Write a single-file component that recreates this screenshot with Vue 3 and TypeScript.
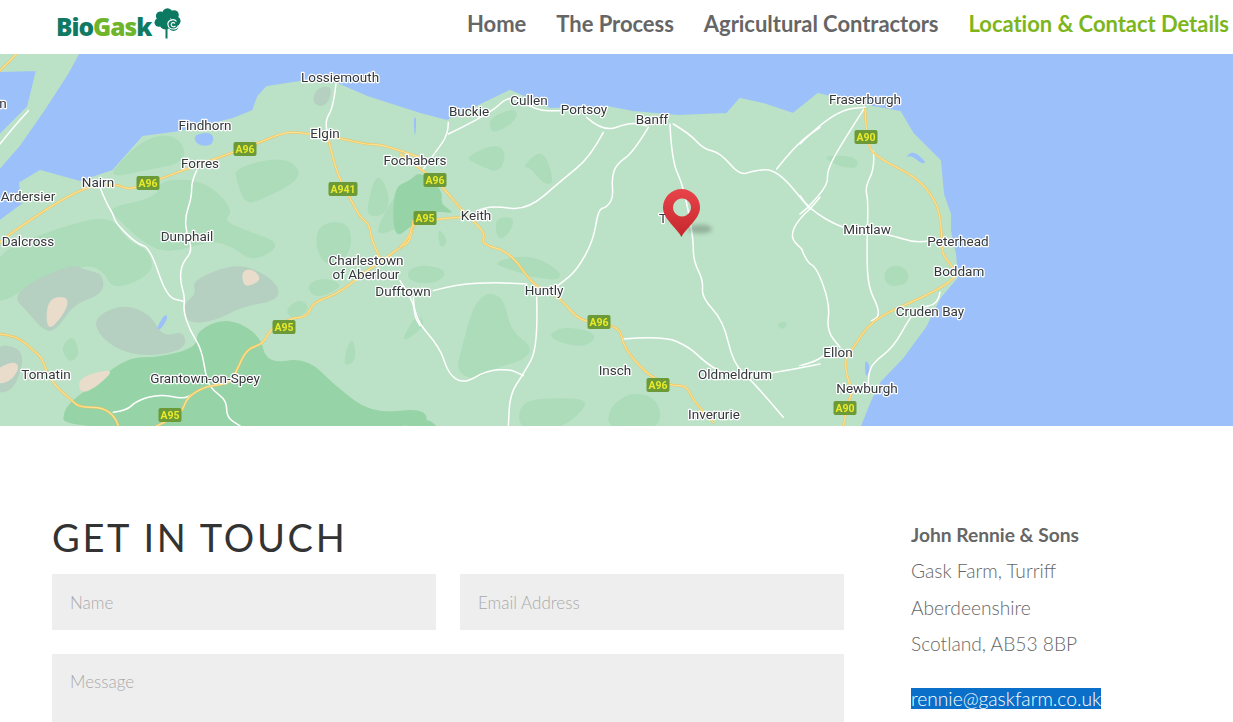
<script setup lang="ts">
type Pt = [number, number]
type Origin = 0 | 400 | 800

const smooth = (p: number[], closed = true): string => {
  const pts: Pt[] = []
  for (let i = 0; i < p.length; i += 2) pts.push([p[i], p[i + 1]])
  const mid = (a: Pt, b: Pt): string => `${(a[0] + b[0]) / 2} ${(a[1] + b[1]) / 2}`
  if (closed) {
    let d = `M${mid(pts[pts.length - 1], pts[0])}`
    pts.forEach((q, i) => {
      d += `Q${q[0]} ${q[1]} ${mid(q, pts[(i + 1) % pts.length])}`
    })
    return d + 'Z'
  }
  let d = `M${pts[0][0]} ${pts[0][1]}`
  for (let i = 1; i < pts.length - 1; i++) d += `Q${pts[i][0]} ${pts[i][1]} ${mid(pts[i], pts[i + 1])}`
  const last = pts[pts.length - 1]
  return d + `L${last[0]} ${last[1]}`
}

const land =
  'M0 54L78 54L67 74L43 111L20 144L0 167L0 135L28 107L37 70L0 71Z' +
  'M0 221L23 204L20 183L40 171L80 182L113 171L143 137L180 132L233 119L253 111L258 97L267 87L300 82L337 84L367 97L420 114' +
  'L447 121L483 104L510 91L550 109L607 107L633 112L677 116L727 114L740 99L763 104L793 114L818 94L867 106L900 112L913 134L940 161L943 194L950 214L950 231L955 254L957 277L940 297L925 327L903 357L880 381L870 401L860 426L0 426Z'

const forest: Record<Origin, number[][]> = {
  0: [
    [705,340,860,305,915,370,780,440,735,450,710,380],
    [340,340,440,250,520,240,560,290,540,330,430,350,340,370],
    [480,380,570,375,640,400,700,470,670,500,740,530,850,570,760,625,700,580,640,560,500,600,420,560,340,480,330,460,470,430],
    [-20,600,150,530,330,480,380,560,450,590,460,660,340,710,310,650,250,630,100,690,20,740,-20,740],
    [950,510,1050,500,1055,600,990,640,950,600],
    [1100,460,1130,350,1170,420,1160,480,1110,490],
    [1130,550,1240,500,1280,370,1200,400,1140,500],
    [920,690,970,670,1030,690,990,720,940,730],
    [180,880,220,840,240,900,210,930],
    [860,760,900,735,930,760,900,790,865,790],
    [1040,880,1060,850,1070,920,1030,940]
  ],
  400: [
    [270,190,350,160,350,200,290,235,270,230],
    [195,310,280,270,320,290,300,360,230,330],
    [365,340,430,280,465,390,430,390,390,340],
    [20,650,70,630,145,650,110,690,30,685],
    [285,490,350,490,320,550,290,555],
    [270,625,390,600,480,650,480,680,400,670,340,650],
    [180,900,230,720,310,720,330,830,400,880,370,920,290,940,220,980,170,950],
    [435,850,490,815,600,840,550,885],
    [360,1040,480,1030,580,1040,480,1130,355,1130],
    [625,1060,700,1010,780,1040,780,1130,625,1130],
    [8,850,50,780,80,810,20,860],
    [1125,810,1165,800,1150,830],
    [115,520,145,560,125,585,115,560]
  ],
  800: [
    [65,305,150,305,175,320,170,345,110,335],
    [250,650,290,630,325,650,325,690,260,700]
  ]
}

const deep: Record<Origin, number[][]> = {
  0: [
    [590,830,680,790,780,840,800,930,920,910,1010,1000,1120,1080,1280,1060,1280,1130,190,1130,190,1060,270,1000,380,910,480,910,590,880]
  ],
  400: [
    [-20,400,30,380,60,350,130,410,120,450,170,480,100,470,40,510,-20,560],
    [-10,1130,70,1085,130,1130]
  ],
  800: []
}

const grey: number[][] = [
  [575,680,700,630,780,650,840,700,830,740,720,760,650,800,560,810,550,750,590,720],
  [280,790,370,750,450,780,490,850,550,830,560,880,480,905,380,900,300,850],
  [40,730,100,680,220,630,260,650,310,660,310,720,220,750,170,830,130,830,80,770],
  [-20,870,60,880,70,930,40,1010,-20,1020],
  [935,150,950,100,1000,95,980,160]
]
const sand: number[][] = [
  [725,650,760,645,785,675,755,695,730,695],
  [140,735,205,725,200,770,140,840],
  [-20,950,40,920,60,940,30,985,-20,990],
  [235,970,350,940,290,1000,240,1020]
]
const lakes: { o: Origin; p: number[] }[] = [
  { o: 0, p: [580,240,640,235,640,275,590,275] },
  { o: 0, p: [470,820,495,780,505,790,480,830] },
  { o: 800, p: [315,310,340,290,380,325,365,330,335,305] },
  { o: 800, p: [195,915,210,935,205,965,195,965] },
  { o: 400, p: [40,190,50,190,45,260] }
]

const white: Record<Origin, number[][]> = {
  0: [
    [1008,90,1000,160,975,200,985,250],
    [300,400,320,450,340,480,345,505,410,570,450,580,500,730,550,742],
    [590,350,575,380,575,430,555,490,560,540,578,590,545,630,540,680,555,730,550,770,570,830,605,885,620,980,640,1010,680,1040,680,1090,720,1116],
    [0,270,40,220,85,170],
    [340,1075,380,1070,410,1040,480,1020,550,1035,580,1020],
    [1200,680,1240,740,1245,790,1260,815]
  ],
  400: [
    [145,205,145,240,110,290,70,345],
    [145,240,270,180,330,120,410,170,480,170],
    [560,190,610,235,690,205,740,215],
    [610,235,570,310,490,375,380,470,280,455,230,470],
    [745,220,700,295,650,330,635,370,640,430,620,460,595,465,580,560,530,650,480,690,440,720],
    [810,210,815,320,850,395,880,550,880,620,910,680,905,730,970,800,1000,930,1060,985,1150,1090],
    [820,210,870,240,910,285,960,295,1020,365,1060,350,1130,345,1230,465],
    [1130,345,1190,270,1260,220],
    [1230,465,1195,495,1170,550,1205,585],
    [1230,465,1260,430],
    [100,710,170,690,290,685,380,690],
    [410,730,415,880,370,960,330,1020,325,1116],
    [40,730,40,790,120,880,145,960,190,990,260,950,330,945,370,965],
    [670,855,790,845,870,880,920,930,1000,975,1160,950,1260,930]
  ],
  800: [
    [0,270,50,220,130,165,195,160],
    [195,160,130,260,80,350,85,390,25,460,0,480],
    [0,425,25,465,130,525,200,530,280,545,340,565,400,560],
    [220,290,225,340,195,400,205,440,200,600,205,700,235,760,235,790,215,800],
    [5,585,20,625,50,640,90,750,80,830,120,880],
    [0,935,60,920,90,880],
    [420,715,415,750,360,760,330,790,280,880,220,925,205,960,205,1000]
  ]
}

const yellow: Record<Origin, number[][]> = {
  0: [
    [0,565,20,545,240,400,350,390,380,405,410,400,480,375,560,345,700,295,780,265,860,232,930,240,1010,250,1100,272,1140,270,1260,310],
    [0,50,50,0],
    [985,255,1000,320,1025,390,1055,440,1080,490,1108,510,1115,560,1140,610],
    [1240,500,1235,560,1200,580,1140,625,1100,650,1060,685,1000,725,940,745,920,790,880,790,810,825,790,870,740,885,710,950,690,990,620,995,560,1030,545,1080,470,1116],
    [0,840,50,845,100,890,125,910,150,980,215,1040,240,1060,310,1060,345,1090,355,1116]
  ],
  400: [
    [0,300,70,350,130,400,185,470,240,520,255,545,245,570,330,595,390,680,430,710,480,730,540,805,660,815,670,880,740,960,790,985,820,995,860,995,880,1040,940,1105],
    [0,580,30,550,35,510,110,495,180,490]
  ],
  800: [
    [195,165,200,270,230,310,350,370,400,430,420,480,425,540,425,600,460,640,470,670,400,715,320,750,215,800,160,880,135,915,140,970,160,1010,145,1040,130,1116]
  ]
}

const origins: Origin[] = [0, 400, 800]
const tf = (o: number): string => `translate(${o} 54) scale(.3333)`

const labels: { t: string; x: number; y: number }[] = [
  { t: 'Lossiemouth', x: 340, y: 82 }, { t: 'n', x: 3, y: 108 }, { t: 'Findhorn', x: 205, y: 130 },
  { t: 'Elgin', x: 325, y: 138 }, { t: 'Buckie', x: 469, y: 116 }, { t: 'Cullen', x: 529, y: 105 },
  { t: 'Portsoy', x: 584, y: 114 }, { t: 'Banff', x: 652, y: 124 }, { t: 'Fraserburgh', x: 865, y: 104 },
  { t: 'Forres', x: 200, y: 168 }, { t: 'Fochabers', x: 415, y: 165 }, { t: 'Nairn', x: 98, y: 187 },
  { t: 'Ardersier', x: 28, y: 201 }, { t: 'Keith', x: 476, y: 220 }, { t: 'Dalcross', x: 28, y: 246 },
  { t: 'Dunphail', x: 187, y: 241 }, { t: 'Charlestown', x: 366, y: 265 }, { t: 'of Aberlour', x: 366, y: 279 },
  { t: 'Dufftown', x: 403, y: 296 }, { t: 'Huntly', x: 544, y: 295 }, { t: 'Mintlaw', x: 867, y: 234 },
  { t: 'Peterhead', x: 958, y: 246 }, { t: 'Boddam', x: 959, y: 276 }, { t: 'Cruden Bay', x: 930, y: 316 },
  { t: 'Ellon', x: 838, y: 357 }, { t: 'Tomatin', x: 46, y: 379 }, { t: 'Grantown-on-Spey', x: 205, y: 383 },
  { t: 'Insch', x: 615, y: 375 }, { t: 'Oldmeldrum', x: 735, y: 379 }, { t: 'Newburgh', x: 867, y: 393 },
  { t: 'Inverurie', x: 714, y: 419 }, { t: 'T', x: 663, y: 223 }
]

const shields: { t: string; x: number; y: number }[] = [
  { t: 'A96', x: 245, y: 149 }, { t: 'A96', x: 148, y: 183 }, { t: 'A941', x: 343, y: 189 },
  { t: 'A96', x: 435, y: 180 }, { t: 'A95', x: 425, y: 218 }, { t: 'A96', x: 599, y: 322 },
  { t: 'A96', x: 658, y: 385 }, { t: 'A95', x: 284, y: 327 }, { t: 'A95', x: 170, y: 415 },
  { t: 'A90', x: 866, y: 137 }, { t: 'A90', x: 845, y: 408 }
]

const nav: string[] = ['Home', 'The Process', 'Agricultural Contractors', 'Location & Contact Details']
</script>

<template>
  <div class="page">
    <header class="top">
      <a class="logo">
        <span class="word"><b class="teal">Bio</b><b class="lime">Gas</b><b class="teal">k</b></span>
        <svg class="tree" width="27" height="31" viewBox="0 0 27 31">
          <g fill="#0c7a62">
            <circle cx="13.500" cy="5.500" r="5.200" />
            <circle cx="6.500" cy="8" r="4.600" />
            <circle cx="4.800" cy="14.500" r="4.300" />
            <circle cx="20" cy="7" r="4.800" />
            <circle cx="22" cy="13" r="4.600" />
            <circle cx="19.500" cy="18" r="5" />
            <circle cx="11.500" cy="15" r="6.500" />
            <rect x="11.500" y="18" width="2" height="12.500" />
          </g>
          <path d="M24.500 17.500C23 22 15 22.500 14 17C13 12 20 10 22.500 13.500M21.500 18C19.500 19.500 17.200 18.500 17.200 16.500C17.200 14.500 19.800 14 21 15.500" fill="none" stroke="#fff" stroke-width="1.200" />
        </svg>
      </a>
      <nav class="menu">
        <a v-for="(n, i) in nav" :key="n" class="link" :class="{ on: i === 3 }">{{ n }}</a>
      </nav>
    </header>

    <section class="map">
      <svg width="1233" height="372" viewBox="0 54 1233 372" class="mapsvg">
        <defs>
          <linearGradient id="pinfill" x1="0" y1="0" x2="0" y2="1">
            <stop offset="0" stop-color="#e8434a" />
            <stop offset="1" stop-color="#c4282d" />
          </linearGradient>
          <filter id="soft" x="-50%" y="-50%" width="200%" height="200%">
            <feGaussianBlur stdDeviation="2" />
          </filter>
          <filter id="jpeg" x="0" y="0" width="100%" height="100%">
            <feGaussianBlur stdDeviation=".45" />
          </filter>
          <clipPath id="landclip"><path :d="land" /></clipPath>
        </defs>
        <rect x="0" y="54" width="1233" height="372" fill="#9cc0f9" />
        <g filter="url(#jpeg)">
          <path :d="land" fill="#bbe2c6" stroke="#bbe2c6" stroke-width="2" stroke-linejoin="round" />
          <g clip-path="url(#landclip)">
            <g v-for="o in origins" :key="'f' + o" :transform="tf(o)">
              <path v-for="(p, i) in forest[o]" :key="i" :d="smooth(p)" fill="#acdcb9" />
              <path v-for="(p, i) in deep[o]" :key="'d' + i" :d="smooth(p)" fill="#96d3a7" />
            </g>
            <g :transform="tf(0)">
              <path v-for="(p, i) in grey" :key="i" :d="smooth(p)" fill="#b5cfc0" />
              <path v-for="(p, i) in sand" :key="'s' + i" :d="smooth(p)" fill="#eadccb" />
            </g>
            <path v-for="(l, i) in lakes" :key="'l' + i" :transform="tf(l.o)" :d="smooth(l.p)" fill="#9cc0f9" />
          </g>
          <g v-for="o in origins" :key="'r' + o" :transform="tf(o)" fill="none" stroke-linejoin="round" stroke-linecap="round">
            <path v-for="(p, i) in white[o]" :key="i" :d="smooth(p, false)" stroke="#fff" stroke-width="4.500" />
            <path v-for="(p, i) in yellow[o]" :key="'y' + i" :d="smooth(p, false)" stroke="#f2c35c" stroke-width="7" />
            <path v-for="(p, i) in yellow[o]" :key="'z' + i" :d="smooth(p, false)" stroke="#fde293" stroke-width="3.500" />
          </g>
          <g v-for="s in shields" :key="s.t + s.x">
            <rect :x="s.x - (s.t.length > 3 ? 14.5 : 11.5)" :y="s.y - 7" :width="s.t.length > 3 ? 29 : 23" height="14" rx="2" fill="#6d9a37" />
            <text :x="s.x" :y="s.y + 4" class="shield" text-anchor="middle">{{ s.t }}</text>
          </g>
          <text v-for="l in labels" :key="l.t" :x="l.x" :y="l.y" class="place" text-anchor="middle">{{ l.t }}</text>
        </g>
        <ellipse cx="700" cy="229" rx="12" ry="4.500" fill="#5a6a5e" opacity=".4" filter="url(#soft)" />
        <path
          d="M681.500 237C677 228 663 219 663 207.500A18.500 18.500 0 0 1 700 207.500C700 219 686 228 681.500 237ZM682 198.500A9 9 0 1 0 682.001 198.500Z"
          fill="url(#pinfill)"
          fill-rule="evenodd"
        />
      </svg>
    </section>

    <main class="body">
      <div class="left">
        <h1 class="title">GET IN TOUCH</h1>
        <form class="form">
          <div class="row">
            <input class="field" type="text" placeholder="Name" />
            <input class="field" type="text" placeholder="Email Address" />
          </div>
          <textarea class="field msg" placeholder="Message"></textarea>
        </form>
      </div>
      <aside class="right">
        <p class="strong">John Rennie &amp; Sons</p>
        <p>Gask Farm, Turriff</p>
        <p>Aberdeenshire</p>
        <p>Scotland, AB53 8BP</p>
        <p class="mail"><span>rennie@gaskfarm.co.uk</span></p>
      </aside>
    </main>
  </div>
</template>

<style>
html, body { margin: 0; overflow: hidden; background: #fff; }
</style>

<style scoped>
.page { width: 1233px; height: 722px; overflow: hidden; font-family: Lato, "Open Sans", sans-serif; color: #666; }
.top { height: 54px; display: flex; align-items: center; justify-content: space-between; padding: 0 4px 8px 56px; box-sizing: border-box; background: #fff; }
.logo { display: flex; align-items: center; }
.word { font-family: "Open Sans", Lato, sans-serif; font-size: 24.5px; letter-spacing: -1px; margin-top: 8px; line-height: 30px; }
.word b { font-weight: 800; }
.teal { color: #0f7a64; }
.lime { color: #6fb52c; }
.tree { margin: 4px 0 0 3px; align-self: flex-start; }
.menu { display: flex; gap: 30px; }
.link { font-size: 22px; font-weight: 700; color: #666; letter-spacing: -0.04px; }
.link.on { color: #7db61c; }
.map { height: 372px; }
.mapsvg { display: block; }
.place { font-family: Roboto, sans-serif; font-size: 13.5px; fill: #33373a; stroke: #fff; stroke-width: 2.5px; paint-order: stroke; stroke-linejoin: round; }
.shield { font-family: Roboto, sans-serif; font-size: 10.5px; font-weight: 700; fill: #e9ea2b; }
.body { display: flex; padding: 88px 0 0 52px; }
.left { width: 792px; }
.title { margin: 0 0 14px; font-size: 38px; line-height: 46px; font-weight: 400; letter-spacing: 2.7px; color: #333; }
.form { display: flex; flex-direction: column; gap: 24px; }
.row { display: flex; gap: 24px; }
.field { box-sizing: border-box; border: 0; outline: 0; margin: 0; background: #eee; height: 56px; width: 384px; padding: 0 18px; font: 300 17px Lato, sans-serif; color: #aaa; }
.field::placeholder { color: #aaa; opacity: 1; }
.msg { display: block; width: 792px; height: 120px; padding-top: 17px; resize: none; }
.right { margin-left: 67px; padding-top: 3px; font-size: 19.2px; font-weight: 300; line-height: 36.300px; color: #666; }
.right p { margin: 0; white-space: nowrap; }
.strong { font-weight: 700; }
.right .mail { margin-top: 26px; line-height: 21px; }
.mail span { display: inline-block; background: #0a6fc8; color: #fff; }
</style>
